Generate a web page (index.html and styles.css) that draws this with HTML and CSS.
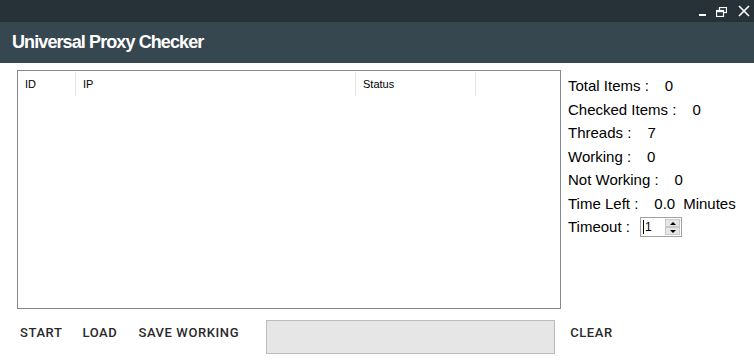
FILE: index.html
```html
<!DOCTYPE html>
<html lang="en">
<head>
<meta charset="UTF-8" />
<title>Universal Proxy Checker</title>
<link rel="stylesheet" href="styles.css">
</head>
<body>

<div class="titlebar">
  <span class="win-btn min"></span>
  <svg class="win-btn restore" width="11" height="10" viewBox="0 0 11 10">
    <rect x="3.5" y="0.5" width="7" height="5" fill="none" stroke="#fff" stroke-width="1.2"/>
    <rect x="0.5" y="3.5" width="7" height="6" fill="#263238" stroke="#fff" stroke-width="1.2"/>
    <line x1="0.5" y1="4.5" x2="7.5" y2="4.5" stroke="#fff" stroke-width="1.4"/>
  </svg>
  <svg class="win-btn close" width="12" height="12" viewBox="0 0 12 12">
    <path d="M1 1 L11 11 M11 1 L1 11" stroke="#fff" stroke-width="1.6"/>
  </svg>
</div>

<div class="header">
  <h1>Universal Proxy Checker</h1>
</div>

<div class="main">
  <div class="listbox">
    <div class="list-head">
      <div class="col col-id">ID</div>
      <div class="col col-ip">IP</div>
      <div class="col col-status">Status</div>
    </div>
  </div>

  <div class="stats">
    <div class="row"><span>Total Items :</span><span class="val">0</span></div>
    <div class="row"><span>Checked Items :</span><span class="val">0</span></div>
    <div class="row"><span>Threads :</span><span class="val">7</span></div>
    <div class="row"><span>Working :</span><span class="val">0</span></div>
    <div class="row"><span>Not Working :</span><span class="val">0</span></div>
    <div class="row"><span>Time Left :</span><span class="val">0.0</span><span class="unit">Minutes</span></div>
    <div class="row"><span>Timeout :</span>
      <div class="spin">
        <span class="spin-text">1</span>
        <div class="spin-btns">
          <span class="arrow up"></span>
          <span class="arrow down"></span>
        </div>
      </div>
    </div>
  </div>
</div>

<div class="footer">
  <button class="flat start">START</button>
  <button class="flat load">LOAD</button>
  <button class="flat save">SAVE WORKING</button>
  <div class="progress"></div>
  <button class="flat clear">CLEAR</button>
</div>

</body>
</html>
```

FILE: styles.css
```css
:root {
  --bar-dark: #263238;
  --bar: #37474f;
  --border: #828790;
  --text: #000;
}

body {
  margin: 0;
  background: #fff;
  font-family: "Liberation Sans", Arial, sans-serif;
  width: 754px;
  height: 362px;
  overflow: hidden;
}

.titlebar {
  height: 22px;
  background: var(--bar-dark);
  display: flex;
  align-items: center;
  justify-content: flex-end;
  padding-right: 4px;
}

.win-btn {
  display: block;
}

.min {
  width: 7px;
  height: 2px;
  background: #fff;
  margin-top: 7px;
  margin-right: 10px;
}

.restore {
  margin-right: 11px;
  margin-top: 1px;
}

.close {
  margin-top: -1px;
}

.header {
  height: 41px;
  background: var(--bar);
  display: flex;
  align-items: center;
  padding-left: 12px;
}

.header h1 {
  margin: 0;
  color: #fff;
  font-size: 18px;
  font-weight: bold;
  letter-spacing: -0.9px;
}

.main {
  display: flex;
  padding-top: 7px;
}

.listbox {
  margin-left: 17px;
  width: 542px;
  height: 237px;
  border: 1px solid var(--border);
  background: #fff;
}

.list-head {
  display: flex;
  height: 26px;
  padding-top: 1px;
}

.col {
  font-size: 11px;
  color: #000;
  padding-left: 7px;
  line-height: 24px;
  border-right: 1px solid #e5e5e5;
  box-sizing: border-box;
  height: 24px;
}

.col-id { width: 58px; }
.col-ip { width: 280px; }
.col-status { width: 120px; }

.stats {
  margin-left: 7px;
  padding-top: 4px;
  font-size: 15px;
  color: var(--text);
}

.row {
  height: 23.5px;
  display: flex;
  align-items: center;
}

.val {
  margin-left: 16px;
}

.unit {
  margin-left: 8px;
}

.spin {
  margin-left: 10px;
  width: 40px;
  height: 18px;
  border: 1px solid #a0a0a0;
  display: flex;
  justify-content: space-between;
}

.spin-text {
  font-size: 12px;
  padding-left: 1px;
  border-left: 1px solid #000;
  margin-left: 2px;
  height: 14px;
  margin-top: 2px;
  line-height: 14px;
}

.spin-btns {
  width: 15px;
  display: flex;
  flex-direction: column;
  margin: 1px;
}

.arrow {
  flex: 1;
  background: #e6e6e6;
  border: 1px solid #c8c8c8;
  position: relative;
}

.arrow::after {
  content: "";
  position: absolute;
  left: 4px;
  top: 2px;
  border-left: 3px solid transparent;
  border-right: 3px solid transparent;
}

.up::after {
  border-bottom: 3px solid #000;
}

.down::after {
  border-top: 3px solid #000;
}

.footer {
  display: flex;
  align-items: flex-start;
  margin-top: 11px;
  padding-left: 20px;
}

.flat {
  background: none;
  border: none;
  padding: 0;
  height: 24px;
  font-family: Roboto, "Liberation Sans", sans-serif;
  font-weight: 500;
  font-size: 13px;
  letter-spacing: 0.6px;
  color: #2a2a2a;
  cursor: pointer;
}

.start { margin-right: 20px; }
.load { margin-right: 21px; }
.save { margin-right: 27px; }

.progress {
  width: 287px;
  height: 32px;
  background: #e6e6e6;
  border: 1px solid #bcbcbc;
  margin-right: 15px;
}
```
